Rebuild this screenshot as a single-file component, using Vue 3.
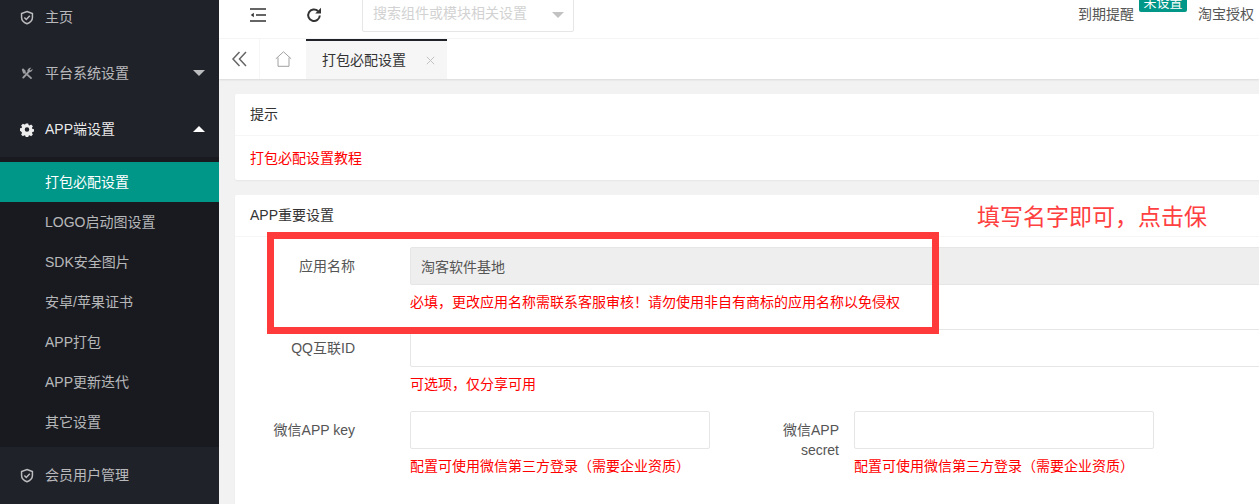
<script setup>
const subs = ['打包必配设置', 'LOGO启动图设置', 'SDK安全图片', '安卓/苹果证书', 'APP打包', 'APP更新迭代', '其它设置']
const shield = 'M8 1.200 14.200 3.400V8c0 3.500-2.600 5.800-6.200 7.200C4.400 13.800 1.800 11.500 1.800 8V3.400Z'
</script>

<template>
  <div class="app">
    <aside class="side">
      <div class="nav">
        <div class="row">
          <svg class="ico" viewBox="0 0 16 16" fill="none" stroke="currentColor" stroke-width="1.700"><path :d="shield" /><path d="M5 8l2.200 2.200L11.200 6" /></svg>
          <span>主页</span>
        </div>
        <div class="row">
          <svg class="ico dim" viewBox="0 0 16 16" fill="currentColor"><path d="M2 3.500 3.500 2l3.200 3.200-.5 1 1 1-1.500 1.500-1-1-1 .5ZM9 8.500l5 4.500-1.500 1.500-5-4.500ZM13 1.500l-2 2 1.200 1.200 2-2c.5 1.800-.8 4-3 3.500L4.500 13.500c-.8.900-2.500-.8-1.700-1.600L8.500 6c-.5-2.500 2-5 4.500-4.500Z" /></svg>
          <span>平台系统设置</span>
          <i class="tri down"></i>
        </div>
        <div class="row open">
          <svg class="ico" viewBox="0 0 16 16" fill="currentColor"><path fill-rule="evenodd" d="M6.600 1h2.800l.4 1.900 1.200.5 1.700-1 2 2-1 1.700.5 1.200 1.800.3v2.800l-1.800.4-.5 1.200 1 1.700-2 2-1.700-1-1.200.5-.4 1.800H6.600l-.4-1.800-1.200-.5-1.700 1-2-2 1-1.700-.5-1.200L0 9.400V6.600l1.800-.3.500-1.200-1-1.700 2-2 1.700 1 1.200-.5ZM8 5.400a2.600 2.600 0 1 0 0 5.200 2.600 2.600 0 0 0 0-5.200Z" /></svg>
          <span>APP端设置</span>
          <i class="tri up"></i>
        </div>
        <ul class="subs">
          <li v-for="(s, i) in subs" :key="s" :class="{ active: i === 0 }">{{ s }}</li>
        </ul>
        <div class="row">
          <svg class="ico" viewBox="0 0 16 16" fill="none" stroke="currentColor" stroke-width="1.700"><path :d="shield" /><path d="M5 8l2.200 2.200L11.200 6" /></svg>
          <span>会员用户管理</span>
        </div>
      </div>
    </aside>

    <main class="main">
      <header class="top">
        <svg class="tool first" viewBox="0 0 16 14" fill="none" stroke="#333" stroke-width="1.400"><path d="M0 1h16M6 7h10M0 13h16" /><path d="M3.800 4.800v4.400L.8 7Z" fill="#333" stroke="none" /></svg>
        <svg class="tool second" viewBox="0 0 16 16" fill="none" stroke="#333" stroke-width="2"><path d="M13.800 8.500a5.800 5.800 0 1 1-1.800-4.500" /><path d="M15 .8v5.800H9.200Z" fill="#333" stroke="none" /></svg>
        <div class="search">
          <span>搜索组件或模块相关设置</span>
          <i class="tri gray"></i>
        </div>
        <div class="right">
          <span class="expire">到期提醒<b class="badge">未设置</b></span>
          <span class="auth">淘宝授权</span>
        </div>
      </header>

      <nav class="tabs">
        <div class="tab-btn">
          <svg width="16" height="16" viewBox="0 0 16 16" fill="none" stroke="#666" stroke-width="1.500"><path d="M8.500 1 2 8l6.500 7M15 1 8.500 8l6.500 7" /></svg>
        </div>
        <div class="tab-home">
          <svg width="17" height="16" viewBox="0 0 17 16" fill="none" stroke="#a0a0a0" stroke-width="1"><path d="M.8 7.800 8.500 .8l7.700 7M3 6.500v8.800h11V6.500" /></svg>
        </div>
        <div class="tab">
          <span>打包必配设置</span>
          <svg width="9" height="9" viewBox="0 0 9 9" stroke="#c2c2c2" stroke-width="1"><path d="M.8.800l7.400 7.400M8.200.800 .8 8.200" /></svg>
        </div>
      </nav>

      <div class="content">
        <section class="card first-card">
          <div class="card-head">提示</div>
          <div class="card-body"><span class="red">打包必配设置教程</span></div>
        </section>

        <section class="card">
          <div class="card-head">APP重要设置</div>
          <div class="form">
            <div class="field">
              <label class="lab">应用名称</label>
              <div class="block">
                <div class="input wide disabled">淘客软件基地</div>
                <p class="help">必填，更改应用名称需联系客服审核！请勿使用非自有商标的应用名称以免侵权</p>
              </div>
            </div>
            <div class="field">
              <label class="lab">QQ互联ID</label>
              <div class="block">
                <div class="input wide"></div>
                <p class="help">可选项，仅分享可用</p>
              </div>
            </div>
            <div class="field">
              <label class="lab">微信APP key</label>
              <div class="block short">
                <div class="input"></div>
                <p class="help">配置可使用微信第三方登录（需要企业资质）</p>
              </div>
              <label class="lab second-lab">微信APP secret</label>
              <div class="block-inline">
                <div class="input"></div>
                <p class="help">配置可使用微信第三方登录（需要企业资质）</p>
              </div>
            </div>
          </div>
        </section>

        <div class="mark"></div>
        <div class="note">填写名字即可，点击保</div>
      </div>
    </main>
  </div>
</template>

<style>
html, body { margin: 0; padding: 0; overflow: hidden; }
</style>

<style scoped>
.app {
  width: 1259px;
  height: 504px;
  display: flex;
  overflow: hidden;
  font: 14px/20px "Liberation Sans", "Noto Sans CJK SC", sans-serif;
  color: #666;
  background: #fff;
}
.side { width: 219px; flex: none; background: #20222a; overflow: hidden; }
.nav { margin-top: -11px; }
.row {
  height: 56px;
  display: flex;
  align-items: center;
  padding-left: 20px;
  position: relative;
  color: rgba(255, 255, 255, .7);
}
.row.open { color: rgba(255, 255, 255, .92); }
.ico { width: 14px; height: 15px; margin-right: 11px; flex: none; }
.ico.dim { opacity: .8; }
.tri { width: 0; height: 0; border: 6px solid transparent; position: absolute; right: 14px; }
.tri.down { border-top-color: rgba(255, 255, 255, .7); top: 25px; }
.tri.up { border-bottom-color: #fff; top: 19px; }
.subs { list-style: none; margin: 0; padding: 5px 0; background: #181a1f; }
.subs li { height: 40px; line-height: 40px; padding-left: 45px; color: rgba(255, 255, 255, .7); }
.subs li.active { background: #009688; color: #fff; }

.main { flex: 1; min-width: 0; display: flex; flex-direction: column; }
.top {
  height: 38px;
  flex: none;
  display: flex;
  align-items: flex-start;
  border-bottom: 1px solid #f6f6f6;
}
.tool { flex: none; }
.tool.first { width: 16px; height: 14px; margin: 8px 0 0 31px; }
.tool.second { width: 16px; height: 16px; margin: 7px 0 0 40px; }
.search {
  width: 212px;
  height: 38px;
  margin: -6px 0 0 40px;
  border: 1px solid #e6e6e6;
  border-radius: 2px;
  flex: none;
  display: flex;
  align-items: center;
  padding-left: 10px;
  box-sizing: border-box;
  position: relative;
  color: #d2d2d2;
}
.tri.gray { border-top-color: #c2c2c2; right: 9px; top: 17px; }
.right { margin-left: auto; display: flex; padding-top: 4px; color: #555; }
.expire { position: relative; margin-right: 64px; }
.auth { margin-right: 5px; }
.badge {
  position: absolute;
  left: 61px;
  top: -16px;
  width: 48px;
  height: 24px;
  line-height: 30px;
  text-align: center;
  font-size: 13px;
  font-weight: 400;
  color: #fff;
  background: #009688;
  border-radius: 2px;
}

.tabs {
  height: 40px;
  flex: none;
  display: flex;
  background: #fff;
  box-shadow: 0 1px 2px rgba(0, 0, 0, .1);
  position: relative;
  z-index: 1;
}
.tab-btn {
  width: 40px;
  flex: none;
  display: flex;
  align-items: center;
  justify-content: center;
  border-right: 1px solid #f6f6f6;
}
.tab-home { width: 46px; flex: none; display: flex; align-items: center; justify-content: center; }
.tab {
  width: 141px;
  flex: none;
  box-sizing: border-box;
  background: #f6f6f6;
  border-top: 2px solid #20222a;
  display: flex;
  align-items: center;
  padding: 0 12px 0 16px;
  justify-content: space-between;
  color: #333;
}

.content {
  flex: 1;
  min-height: 0;
  overflow: hidden;
  position: relative;
  background: #f2f2f2;
  padding: 15px 0 0 16px;
}
.card { width: 1100px; background: #fff; border-radius: 2px; box-shadow: 0 1px 2px rgba(0, 0, 0, .05); }
.first-card { margin-bottom: 15px; }
.card-head {
  height: 41px;
  line-height: 41px;
  padding: 0 15px;
  border-bottom: 1px solid #f6f6f6;
  color: #333;
}
.card-body { padding: 12px 15px; height: 20px; }
.red { color: #f00; }
.form { padding: 10px 15px 40px; }
.field { display: flex; align-items: flex-start; margin-bottom: 17px; }
.lab {
  width: 120px;
  flex: none;
  box-sizing: border-box;
  padding: 9px 15px 0 0;
  text-align: right;
  color: #555;
}
.block { margin-left: 40px; flex: 1; }
.block.short { flex: none; width: 300px; }
.block-inline { width: 300px; flex: none; }
.second-lab { width: 110px; margin-left: 34px; }
.input {
  height: 38px;
  box-sizing: border-box;
  border: 1px solid #e6e6e6;
  border-radius: 2px;
  padding: 9px 10px;
  background: #fff;
  color: #555;
}
.input.disabled { background: #eee; }
.help { margin: 7px 0 0; color: #f00; white-space: nowrap; }

.mark {
  position: absolute;
  left: 48px;
  top: 153px;
  width: 672px;
  height: 102px;
  box-sizing: border-box;
  border: 7px solid #ff3a3a;
}
.note {
  position: absolute;
  left: 758px;
  top: 122px;
  font-size: 23px;
  line-height: 32px;
  color: #ff4040;
  white-space: nowrap;
}
</style>
